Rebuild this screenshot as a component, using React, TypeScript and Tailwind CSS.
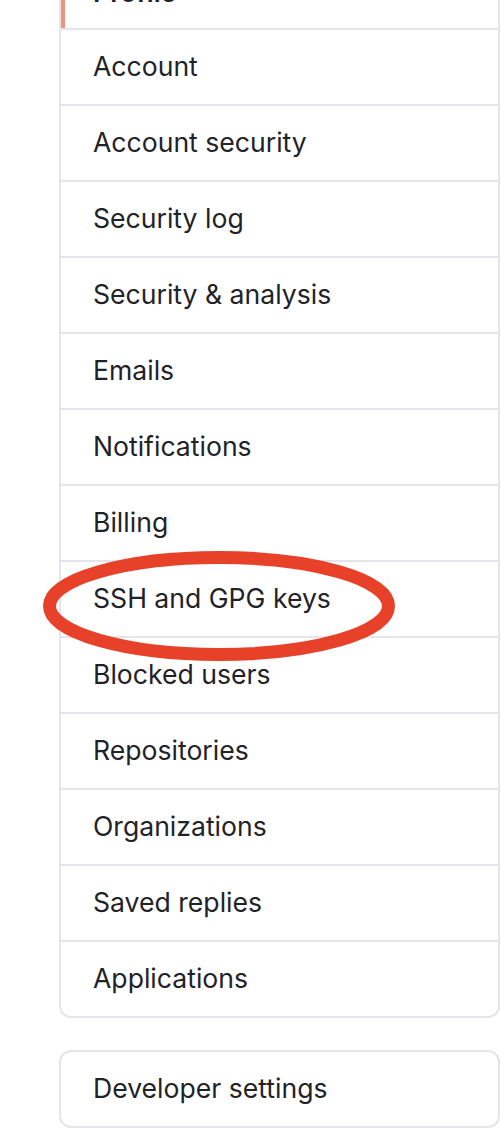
import React from 'react';

const MENU_ITEMS = [
  'Profile',
  'Account',
  'Account security',
  'Security log',
  'Security & analysis',
  'Emails',
  'Notifications',
  'Billing',
  'SSH and GPG keys',
  'Blocked users',
  'Repositories',
  'Organizations',
  'Saved replies',
  'Applications',
];

const SELECTED = 'Profile';

const App: React.FC = () => {
  return (
    <div
      className="relative h-[1138px] w-[500px] overflow-hidden bg-white text-[#1f2328]"
      style={{ fontFamily: 'Inter, "Noto Sans", sans-serif' }}
    >
      <div className="ml-[59px] -mt-[48px] w-[441px]">
        <nav className="overflow-hidden rounded-[12px] border-2 border-[#e4e5ea]">
          {MENU_ITEMS.map((item, index) => (
            <div
              key={item}
              className={`box-content flex items-center text-[26.6px] ${index > 0 ? 'border-t-2 border-[#e4e5ea]' : ''} ${
                item === SELECTED
                  ? 'h-[70px] border-l-4 border-l-[#f4907c] pl-[28px] pt-[4px] font-semibold'
                  : 'h-[74px] pl-[32px]'
              }`}
            >
              {item}
            </div>
          ))}
        </nav>

        <div className="mt-[32px] rounded-[12px] border-2 border-[#e4e5ea]">
          <div className="flex h-[74px] items-center pl-[32px] text-[26.6px]">Developer settings</div>
        </div>
      </div>

      {/* annotation drawn over the screenshot */}
      <svg
        className="pointer-events-none absolute left-0 top-0"
        width="500"
        height="1138"
        viewBox="0 0 500 1138"
      >
        <ellipse cx="219" cy="606" rx="169.5" ry="48.5" fill="none" stroke="#e8412a" strokeWidth="13" />
      </svg>
    </div>
  );
};

export default App;
